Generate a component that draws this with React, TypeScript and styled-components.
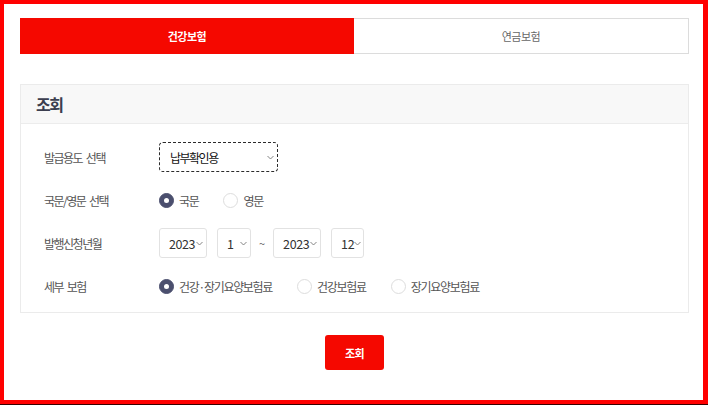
import React from "react";
import styled, { createGlobalStyle } from "styled-components";

const GlobalStyle = createGlobalStyle`
  html, body { margin: 0; padding: 0; background: #ffffff; }
  body { font-family: "Noto Sans CJK KR", "Noto Sans", sans-serif; }
  * { box-sizing: border-box; }
`;

const Outer = styled.div`
  width: 708px;
  height: 405px;
  border-bottom: 1px solid #3a0000;
`;

const Frame = styled.div`
  height: 404px;
  border: 4px solid #ff0000;
  border-right-width: 5px;
  padding: 14px 14px 0 16px;
  display: flex;
  flex-direction: column;
`;

const Tabs = styled.div`
  display: grid;
  grid-template-columns: 334px 1fr;
  height: 36px;
`;

const Tab = styled.div<{ $active?: boolean }>`
  display: flex;
  align-items: center;
  justify-content: center;
  font-size: 11px;
  letter-spacing: -0.5px;
  font-weight: ${(p) => (p.$active ? 700 : 400)};
  color: ${(p) => (p.$active ? "#ffffff" : "#666666")};
  background: ${(p) => (p.$active ? "#f50800" : "#ffffff")};
  border: 1px solid ${(p) => (p.$active ? "#f50800" : "#dcdcdc")};
  border-left-width: ${(p) => (p.$active ? "1px" : "0")};
`;

const Panel = styled.section`
  margin-top: 30px;
  border: 1px solid #ebebeb;
`;

const PanelHeader = styled.h2`
  margin: 0;
  height: 39px;
  padding-left: 15px;
  display: flex;
  align-items: center;
  background: #f8f8f8;
  border-bottom: 1px solid #ececec;
  font-size: 16px;
  font-weight: 700;
  letter-spacing: -1.5px;
  color: #3b3e4f;
`;

const PanelBody = styled.div`
  padding: 18px 23px 11px;
  display: flex;
  flex-direction: column;
  gap: 13px;
`;

const Row = styled.div`
  display: flex;
  align-items: center;
  height: 30px;
`;

const Label = styled.div`
  width: 115px;
  font-size: 12px;
  letter-spacing: -1.5px;
  word-spacing: 2.5px;
  color: #555555;
`;

const Controls = styled.div<{ $gap?: number }>`
  display: flex;
  align-items: center;
  gap: ${(p) => p.$gap ?? 10}px;
`;

const SelectBox = styled.div<{ $w: number; $focus?: boolean }>`
  width: ${(p) => p.$w}px;
  height: 30px;
  flex-shrink: 0;
  display: flex;
  align-items: center;
  justify-content: space-between;
  padding: 0 3px 0 ${(p) => (p.$focus ? 10 : 9)}px;
  border: 1px ${(p) => (p.$focus ? "dashed #2b2b2b" : "solid #e2e2e2")};
  border-radius: ${(p) => (p.$focus ? 4 : 3)}px;
  font-size: ${(p) => (p.$focus ? 12 : 12.5)}px;
  letter-spacing: ${(p) => (p.$focus ? "-1.5px" : "-0.4px")};
  color: ${(p) => (p.$focus ? "#111111" : "#333333")};
  background: #ffffff;
  white-space: nowrap;
  svg { flex-shrink: 0; }
`;

const Tilde = styled.span`
  font-size: 11px;
  color: #666666;
  margin: 0 -2px;
`;

const RadioGroup = styled.div`
  display: flex;
  align-items: center;
  gap: 25px;
`;

const RadioItem = styled.label`
  display: flex;
  align-items: center;
  gap: 5px;
  font-size: 12px;
  letter-spacing: -1.3px;
  color: #555555;
`;

const RadioCircle = styled.span<{ $checked?: boolean }>`
  width: 15px;
  height: 15px;
  border-radius: 50%;
  display: flex;
  align-items: center;
  justify-content: center;
  background: ${(p) => (p.$checked ? "#4b4f6e" : "#ffffff")};
  border: 1px solid ${(p) => (p.$checked ? "#4b4f6e" : "#dddddd")};
  &::after {
    content: "";
    display: ${(p) => (p.$checked ? "block" : "none")};
    width: 5px;
    height: 5px;
    border-radius: 50%;
    background: #ffffff;
  }
`;

const Footer = styled.div`
  display: flex;
  justify-content: center;
  margin-top: 22px;
`;

const SearchButton = styled.button`
  width: 59px;
  height: 35px;
  border: none;
  border-radius: 3px;
  background: #f50800;
  color: #ffffff;
  font-family: inherit;
  font-size: 11px;
  font-weight: 700;
  letter-spacing: -0.5px;
  padding: 0;
`;

const Chevron = () => (
  <svg width="7" height="5" viewBox="0 0 7 5">
    <polyline points="0.5,1 3.5,4 6.5,1" fill="none" stroke="#777" strokeWidth="0.9" />
  </svg>
);

const Select = ({ w, value, focus }: { w: number; value: string; focus?: boolean }) => (
  <SelectBox $w={w} $focus={focus}>
    <span>{value}</span>
    <Chevron />
  </SelectBox>
);

const Radio = ({ label, checked }: { label: string; checked?: boolean }) => (
  <RadioItem>
    <RadioCircle $checked={checked} />
    <span>{label}</span>
  </RadioItem>
);

export default function App() {
  return (
    <>
      <GlobalStyle />
      <Outer>
        <Frame>
          <Tabs>
            <Tab $active>건강보험</Tab>
            <Tab>연금보험</Tab>
          </Tabs>
          <Panel>
            <PanelHeader>조회</PanelHeader>
            <PanelBody>
              <Row>
                <Label>발급용도 선택</Label>
                <Select w={119} value="납부확인용" focus />
              </Row>
              <Row>
                <Label>국문/영문 선택</Label>
                <RadioGroup>
                  <Radio label="국문" checked />
                  <Radio label="영문" />
                </RadioGroup>
              </Row>
              <Row>
                <Label>발행신청년월</Label>
                <Controls $gap={10}>
                  <Select w={48} value="2023" />
                  <Select w={34} value="1" />
                  <Tilde>~</Tilde>
                  <Select w={48} value="2023" />
                  <Select w={33} value="12" />
                </Controls>
              </Row>
              <Row>
                <Label>세부 보험</Label>
                <RadioGroup>
                  <Radio label="건강·장기요양보험료" checked />
                  <Radio label="건강보험료" />
                  <Radio label="장기요양보험료" />
                </RadioGroup>
              </Row>
            </PanelBody>
          </Panel>
          <Footer>
            <SearchButton>조회</SearchButton>
          </Footer>
        </Frame>
      </Outer>
    </>
  );
}
